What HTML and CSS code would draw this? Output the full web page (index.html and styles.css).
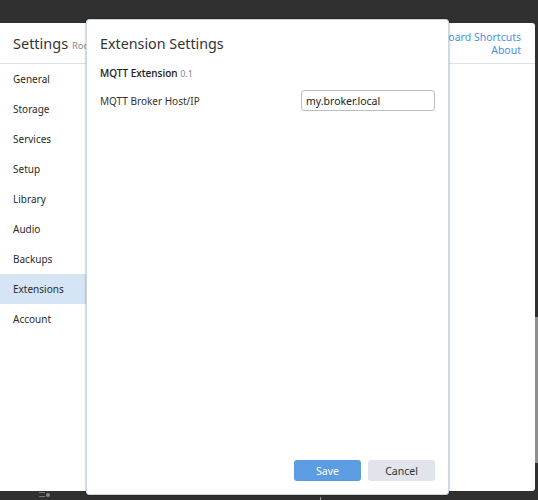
FILE: index.html
```html
<!DOCTYPE html>
<html>
<head>
<meta charset="utf-8">
<link rel="stylesheet" href="styles.css">
</head>
<body>
<div class="desktop">
  <div class="settings">
    <div class="settings-head">
      <div class="settings-title">Settings <span class="sub">Roo</span></div>
      <div class="head-links">
        <a class="link">Keyboard Shortcuts</a>
        <a class="link">About</a>
      </div>
    </div>
    <div class="settings-body">
      <nav class="sidebar">
        <div class="nav-item">General</div>
        <div class="nav-item">Storage</div>
        <div class="nav-item">Services</div>
        <div class="nav-item">Setup</div>
        <div class="nav-item">Library</div>
        <div class="nav-item">Audio</div>
        <div class="nav-item">Backups</div>
        <div class="nav-item active">Extensions</div>
        <div class="nav-item">Account</div>
      </nav>
      <div class="content"></div>
    </div>
  </div>
  <div class="edge-bar"></div>
  <div class="tray"><span class="tray-lines"></span><span class="tray-dot"></span></div>
  <div class="tick"></div>

  <div class="modal">
    <h1 class="modal-title">Extension Settings</h1>
    <div class="ext-name">MQTT Extension <span class="ver">0.1</span></div>
    <div class="field">
      <label class="field-label">MQTT Broker Host/IP</label>
      <input class="field-input" type="text" value="my.broker.local">
    </div>
    <div class="spacer"></div>
    <div class="actions">
      <button class="btn btn-primary">Save</button>
      <button class="btn btn-secondary">Cancel</button>
    </div>
  </div>
</div>
</body>
</html>
```
FILE: styles.css
```css
html, body {
  margin: 0;
  padding: 0;
  background: #303030;
  font-family: "Noto Sans", "Open Sans", sans-serif;
  color: #333;
}
.desktop {
  position: relative;
  width: 538px;
  height: 500px;
  overflow: hidden;
}
.settings {
  position: absolute;
  left: 0;
  top: 23px;
  width: 535px;
  height: 468px;
  background: #fff;
  border-radius: 0 3px 3px 0;
  display: flex;
  flex-direction: column;
  overflow: hidden;
}
.settings-head {
  height: 40px;
  border-bottom: 1px solid #dce3eb;
  display: flex;
  align-items: center;
  justify-content: space-between;
  padding: 0 14px 0 13px;
  flex-shrink: 0;
}
.settings-title {
  font-size: 14.5px;
  color: #333;
  white-space: nowrap;
}
.settings-title .sub {
  font-size: 9.5px;
  color: #888;
}
.head-links {
  display: flex;
  flex-direction: column;
  align-items: flex-end;
  font-size: 10.5px;
  line-height: 13px;
  padding-top: 1px;
}
.link {
  color: #4a90e2;
}
.settings-body {
  flex: 1;
  display: flex;
}
.sidebar {
  width: 86px;
  border-right: 1px solid #d5dee8;
  display: flex;
  flex-direction: column;
}
.nav-item {
  height: 30px;
  line-height: 30px;
  padding-left: 13px;
  font-size: 10px;
  color: #2a2a2a;
}
.nav-item.active {
  background: #d5e5f6;
}
.content {
  flex: 1;
}
.edge-bar {
  position: absolute;
  left: 535px;
  top: 317px;
  width: 3px;
  height: 146px;
  background: #8f8f8f;
}
.tray {
  position: absolute;
  left: 39px;
  top: 492px;
  display: flex;
  align-items: center;
  gap: 1px;
}
.tray-lines {
  width: 6px;
  height: 3px;
  border-top: 1px solid #777;
  border-bottom: 1px solid #777;
}
.tray-dot {
  width: 4px;
  height: 4px;
  border-radius: 50%;
  background: #888;
}
.tick {
  position: absolute;
  left: 320px;
  top: 497px;
  width: 1px;
  height: 3px;
  background: #999;
}
.modal {
  position: absolute;
  left: 86px;
  top: 19px;
  width: 363px;
  height: 476px;
  box-sizing: border-box;
  background: #fff;
  border: 1px solid #cdd6e0;
  border-radius: 3px;
  box-shadow: 0 0 2px rgba(0,0,0,0.5);
  padding: 13px 13px 13px 13px;
  display: flex;
  flex-direction: column;
}
.modal-title {
  margin: 0;
  font-weight: normal;
  font-size: 14.3px;
  line-height: 22px;
  color: #333;
}
.ext-name {
  margin-top: 11px;
  font-size: 10px;
  font-weight: 500;
  color: #222;
  line-height: 14px;
  -webkit-text-stroke: 0.1px #222;
}
.ext-name .ver {
  font-weight: normal;
  font-size: 9px;
  color: #888;
  -webkit-text-stroke: 0;
}
.field {
  margin-top: 13px;
  display: flex;
  justify-content: space-between;
  align-items: flex-start;
}
.field-label {
  font-size: 10px;
  line-height: 14px;
  color: #333;
}
.field-input {
  width: 134px;
  height: 21px;
  box-sizing: border-box;
  border: 1px solid #b9bec6;
  border-radius: 3px;
  padding: 0 4px;
  font-family: inherit;
  font-size: 10.5px;
  color: #222;
  margin-top: -4px;
}
.spacer {
  flex: 1;
}
.actions {
  display: flex;
  justify-content: flex-end;
  gap: 7px;
}
.btn {
  width: 67px;
  height: 21px;
  border: none;
  border-radius: 3px;
  font-family: inherit;
  font-size: 10.5px;
  padding: 0;
}
.btn-primary {
  background: #5c9ce2;
  color: #fff;
}
.btn-secondary {
  background: #e1e4ea;
  color: #333;
}
```
